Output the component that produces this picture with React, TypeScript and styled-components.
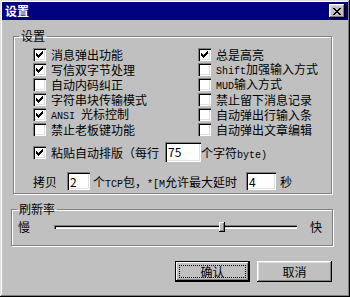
import React from "react";
import styled, { createGlobalStyle } from "styled-components";

const Global = createGlobalStyle`
  html, body {
    margin: 0;
    padding: 0;
    background: #c0c0c0;
  }
  body {
    font-family: "Noto Sans CJK SC", "Liberation Sans", sans-serif;
    font-size: 12px;
    color: #000;
  }
  * {
    box-sizing: border-box;
  }
`;

const Window = styled.div`
  width: 350px;
  height: 297px;
  padding: 2px;
  background: #c0c0c0;
  display: flex;
  flex-direction: column;
  box-shadow: inset -1px -1px #000, inset 1px 1px #dfdfdf,
    inset -2px -2px #808080, inset 2px 2px #fff;
`;

const TitleBar = styled.div`
  height: 18px;
  background: #000080;
  display: flex;
  align-items: center;
  justify-content: space-between;
  padding: 0 3px 0 3px;
`;

const Title = styled.span`
  color: #fff;
  font-weight: 700;
  font-size: 12px;
  line-height: 14px;
`;

const CloseButton = styled.button`
  width: 16px;
  height: 14px;
  padding: 0;
  border: none;
  background: #c0c0c0;
  display: flex;
  align-items: center;
  justify-content: center;
  box-shadow: inset -1px -1px #000, inset 1px 1px #fff,
    inset -2px -2px #808080, inset 2px 2px #dfdfdf;
`;

const Body = styled.div`
  flex: 1;
  display: flex;
  flex-direction: column;
  padding: 9px 15px 0 9px;
`;

const Group = styled.fieldset<{ $inset?: number }>`
  margin: 0 ${(p) => (p.$inset ? 1 : 0)}px 0 ${(p) => p.$inset ?? 0}px;
  padding: 0;
  border: 1px solid #808080;
  box-shadow: inset 1px 1px #fff, 1px 1px #fff;
  min-width: 0;
`;

const Legend = styled.legend`
  margin-left: 5px;
  padding: 0 2px;
  font-size: 12px;
  line-height: 14px;
`;

const OptionsGrid = styled.div`
  display: grid;
  grid-template-columns: 165px 1fr;
  grid-auto-rows: 15px;
  padding: 4px 0 0 19px;
`;

const Option = styled.label`
  display: flex;
  align-items: center;
  gap: 5px;
  white-space: nowrap;
  line-height: 13px;
`;

const Box = styled.span`
  width: 13px;
  height: 13px;
  flex: none;
  background: #fff;
  display: flex;
  align-items: center;
  justify-content: center;
  box-shadow: inset 1px 1px #808080, inset 2px 2px #000,
    inset -1px -1px #fff, inset -2px -2px #dfdfdf;
`;

const Ascii = styled.span`
  font-family: "Liberation Mono", monospace;
  font-size: 10px;
`;

const LineRow = styled.div<{ $top: number; $height: number }>`
  display: flex;
  align-items: center;
  height: ${(p) => p.$height}px;
  margin-top: ${(p) => p.$top}px;
  padding-left: 19px;
  white-space: nowrap;
`;

const Field = styled.div<{ $width: number; $height: number }>`
  width: ${(p) => p.$width}px;
  height: ${(p) => p.$height}px;
  background: #fff;
  padding: 3px 0 0 3px;
  line-height: 14px;
  flex: none;
  box-shadow: inset 1px 1px #808080, inset 2px 2px #000,
    inset -1px -1px #fff, inset -2px -2px #dfdfdf;
`;

const Text = styled.span<{ $gap?: number }>`
  margin-left: ${(p) => p.$gap ?? 0}px;
  margin-right: ${(p) => p.$gap ?? 0}px;
`;

const SliderRow = styled.div`
  display: flex;
  align-items: center;
  height: 13px;
  margin: 4px 10px 12px 6px;
`;

const Track = styled.div`
  position: relative;
  flex: 1;
  height: 4px;
  margin: 0 13px 0 24px;
  box-shadow: inset 1px 1px #808080, inset 2px 2px #000,
    inset -1px -1px #fff, inset -2px -2px #dfdfdf;
`;

const Thumb = styled.div`
  position: absolute;
  left: 165px;
  top: -3px;
  width: 6px;
  height: 10px;
  background: #c0c0c0;
  box-shadow: inset -1px -1px #000, inset 1px 1px #fff,
    inset -2px -2px #808080;
`;

const Buttons = styled.div`
  display: flex;
  justify-content: flex-end;
  gap: 7px;
  margin-top: 15px;
  padding-right: 1px;
`;

const Button = styled.button<{ $default?: boolean }>`
  position: relative;
  width: 75px;
  height: 21px;
  padding: 0;
  border: none;
  background: #c0c0c0;
  font-family: "Noto Sans CJK SC", sans-serif;
  font-size: 12px;
  color: #000;
  box-shadow: ${(p) =>
    p.$default
      ? "inset 0 0 0 1px #000, inset -2px -2px #000, inset 2px 2px #fff, inset -3px -3px #808080"
      : "inset -1px -1px #000, inset 1px 1px #fff, inset -2px -2px #808080, inset 2px 2px #dfdfdf"};
`;

const Focus = styled.span`
  position: absolute;
  inset: 4px;
  border: 1px dotted #000;
`;

const Check = () => (
  <svg width="7" height="7" viewBox="0 0 7 7">
    <path
      d="M0 2h1v1h1v1h1v-1h1v-1h1v-1h1v-1h1v3h-1v1h-1v1h-1v1h-1v1h-1v-1h-1v-1h-1v-1h-1z"
      fill="#000"
    />
  </svg>
);

const CheckBox = ({ checked }: { checked?: boolean }) => (
  <Box>{checked && <Check />}</Box>
);

const options: { label: React.ReactNode; checked: boolean }[] = [
  { label: "消息弹出功能", checked: true },
  { label: "总是高亮", checked: true },
  { label: "写信双字节处理", checked: true },
  { label: <><Ascii>Shift</Ascii>加强输入方式</>, checked: false },
  { label: "自动内码纠正", checked: false },
  { label: <><Ascii>MUD</Ascii>输入方式</>, checked: false },
  { label: "字符串块传输模式", checked: true },
  { label: "禁止留下消息记录", checked: false },
  { label: <><Ascii>ANSI </Ascii>光标控制</>, checked: true },
  { label: "自动弹出行输入条", checked: false },
  { label: "禁止老板键功能", checked: false },
  { label: "自动弹出文章编辑", checked: false },
];

export default function App() {
  return (
    <Window>
      <Global />
      <TitleBar>
        <Title>设置</Title>
        <CloseButton>
          <svg width="8" height="7" viewBox="0 0 8 7">
            <path
              d="M0 0h2v1h1v1h2v-1h1v-1h2v1h-1v1h-1v1h-1v1h1v1h1v1h1v1h-2v-1h-1v-1h-2v1h-1v1h-2v-1h1v-1h1v-1h1v-1h-1v-1h-1v-1h-1z"
              fill="#000"
            />
          </svg>
        </CloseButton>
      </TitleBar>
      <Body>
        <Group $inset={2}>
          <Legend>设置</Legend>
          <OptionsGrid>
            {options.map((o, i) => (
              <Option key={i}>
                <CheckBox checked={o.checked} />
                <span>{o.label}</span>
              </Option>
            ))}
          </OptionsGrid>
          <LineRow $top={5} $height={20}>
            <Option>
              <CheckBox checked />
              <span>粘贴自动排版（每行</span>
            </Option>
            <Text $gap={3} />
            <Field $width={36} $height={20}>75</Field>
            <span>个字符<Ascii>byte)</Ascii></span>
          </LineRow>
          <LineRow $top={10} $height={18} style={{ marginBottom: 3 }}>
            <span>拷贝</span>
            <Text $gap={5} />
            <Field $width={23} $height={18}>2</Field>
            <Text $gap={3}>
              个<Ascii>TCP</Ascii>包，<Ascii>*[M</Ascii>允许最大延时
            </Text>
            <Text $gap={3} />
            <Field $width={30} $height={18}>4</Field>
            <Text $gap={4}>秒</Text>
          </LineRow>
        </Group>
        <Group style={{ marginTop: 8 }}>
          <Legend>刷新率</Legend>
          <SliderRow>
            <span>慢</span>
            <Track>
              <Thumb />
            </Track>
            <span>快</span>
          </SliderRow>
        </Group>
        <Buttons>
          <Button $default>
            确认
            <Focus />
          </Button>
          <Button>取消</Button>
        </Buttons>
      </Body>
    </Window>
  );
}
